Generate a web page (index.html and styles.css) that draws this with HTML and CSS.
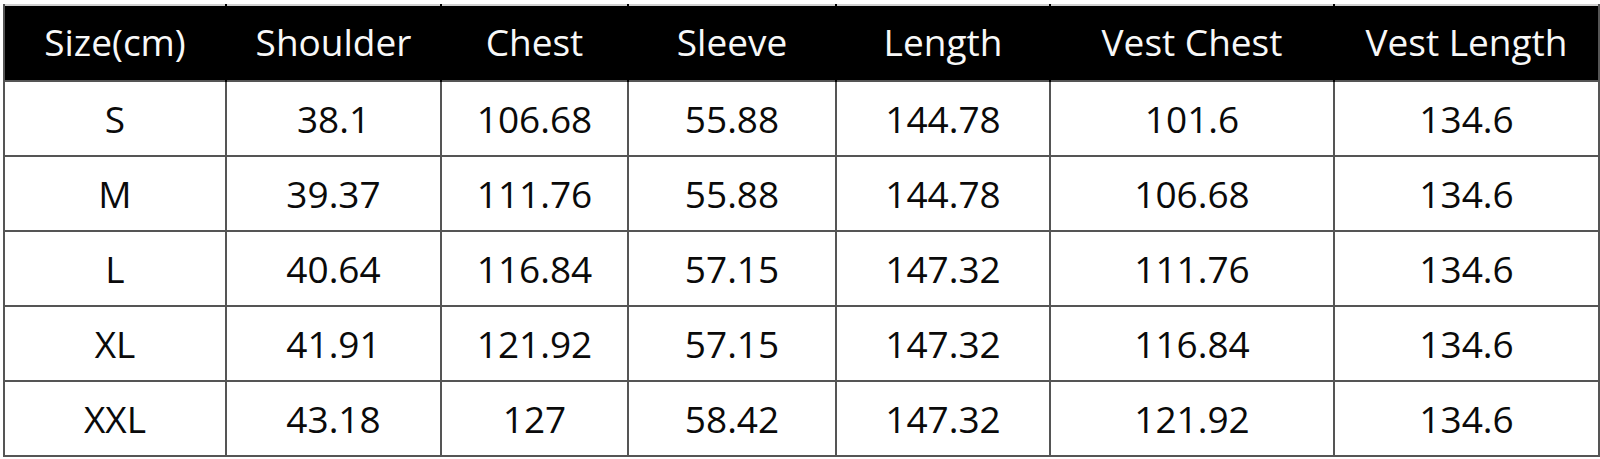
FILE: index.html
```html
<!DOCTYPE html>
<html lang="en">
<head>
<meta charset="utf-8">
<title>Size Chart</title>
<link rel="stylesheet" href="styles.css">
</head>
<body>
<div class="page">
<table class="size-table">
  <colgroup>
    <col class="c1"><col class="c2"><col class="c3"><col class="c4"><col class="c5"><col class="c6"><col class="c7">
  </colgroup>
  <thead>
    <tr><th>Size(cm)</th><th>Shoulder</th><th>Chest</th><th>Sleeve</th><th>Length</th><th>Vest Chest</th><th>Vest Length</th></tr>
  </thead>
  <tbody>
    <tr><td>S</td><td>38.1</td><td>106.68</td><td>55.88</td><td>144.78</td><td>101.6</td><td>134.6</td></tr>
    <tr><td>M</td><td>39.37</td><td>111.76</td><td>55.88</td><td>144.78</td><td>106.68</td><td>134.6</td></tr>
    <tr><td>L</td><td>40.64</td><td>116.84</td><td>57.15</td><td>147.32</td><td>111.76</td><td>134.6</td></tr>
    <tr><td>XL</td><td>41.91</td><td>121.92</td><td>57.15</td><td>147.32</td><td>116.84</td><td>134.6</td></tr>
    <tr><td>XXL</td><td>43.18</td><td>127</td><td>58.42</td><td>147.32</td><td>121.92</td><td>134.6</td></tr>
  </tbody>
</table>
</div>
</body>
</html>
```
FILE: styles.css
```css
html, body {
  margin: 0;
  padding: 0;
  background: #ffffff;
}
.page {
  padding: 4px 0 0 3px;
}
.size-table {
  border-collapse: collapse;
  table-layout: fixed;
  width: 1595px;
  font-family: "Open Sans", "Noto Sans", sans-serif;
  color: #0a0a0a;
  border-top: 2px solid #cfcfcf;
}
.c1 { width: 222px; }
.c2 { width: 215px; }
.c3 { width: 187px; }
.c4 { width: 208px; }
.c5 { width: 214px; }
.c6 { width: 284px; }
.c7 { width: 265px; }
.size-table th {
  background: #000000;
  color: #f8f8f8;
  font-weight: 400;
  font-size: 37px;
  line-height: 50px;
  height: 71px;
  padding: 0 0 3px;
  text-align: center;
  vertical-align: middle;
  border: none;
  border-left: 2px solid #000;
  border-right: 2px solid #000;
}
.size-table th:first-child { border-left: 2px solid #555; }
.size-table th:last-child { border-right: 2px solid #555; }
.size-table td {
  font-size: 37px;
  line-height: 50px;
  height: 73px;
  padding: 0;
  text-align: center;
  vertical-align: middle;
  border: 2px solid #555555;
}
```
